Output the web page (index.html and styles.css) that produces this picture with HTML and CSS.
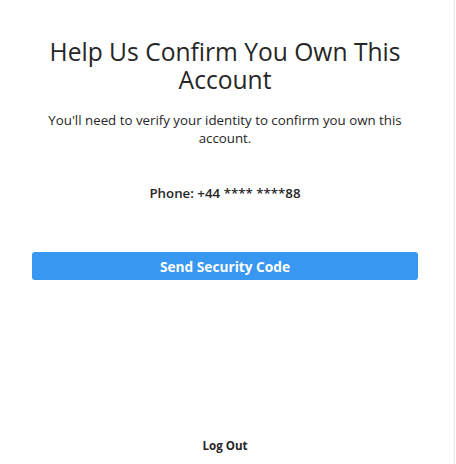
FILE: index.html
```html
<!DOCTYPE html>
<html>
<head>
<meta charset="utf-8">
<link rel="stylesheet" href="styles.css">
</head>
<body>
<div class="page">
  <main class="content">
    <h1 class="title">Help Us Confirm You Own This Account</h1>
    <p class="desc">You'll need to verify your identity to confirm you own this account.</p>
    <p class="phone">Phone: +44 **** ****88</p>
    <button class="send">Send Security Code</button>
    <div class="spacer"></div>
    <a class="logout">Log Out</a>
  </main>
</div>
</body>
</html>
```
FILE: styles.css
```css
html, body {
  margin: 0;
  padding: 0;
  background: #fff;
}
body {
  font-family: "Open Sans", "Noto Sans", "Liberation Sans", sans-serif;
  color: #262626;
}
.page {
  width: 454px;
  height: 464px;
  border-right: 1px solid #e6e6e6;
  box-sizing: content-box;
}
.content {
  height: 464px;
  box-sizing: border-box;
  padding: 38px 36px 0 32px;
  display: flex;
  flex-direction: column;
  align-items: center;
  text-align: center;
}
.title {
  margin: 0;
  font-size: 24.6px;
  font-weight: 400;
  line-height: 28px;
  padding: 0 10px;
}
.desc {
  margin: 17px 0 0;
  font-size: 13.3px;
  line-height: 18px;
}
.phone {
  margin: 37px 0 0;
  font-size: 13.3px;
  font-weight: 600;
  line-height: 18px;
}
.send {
  margin-top: 50px;
  width: 386px;
  height: 28px;
  border: 0;
  border-radius: 3px;
  background: #3897f0;
  color: #fff;
  font-family: inherit;
  font-size: 13.7px;
  font-weight: 700;
  padding: 0;
}
.spacer {
  flex: 1;
}
.logout {
  font-size: 11.6px;
  font-weight: 700;
  line-height: 16px;
  margin-bottom: 10px;
  color: #262626;
}
```
